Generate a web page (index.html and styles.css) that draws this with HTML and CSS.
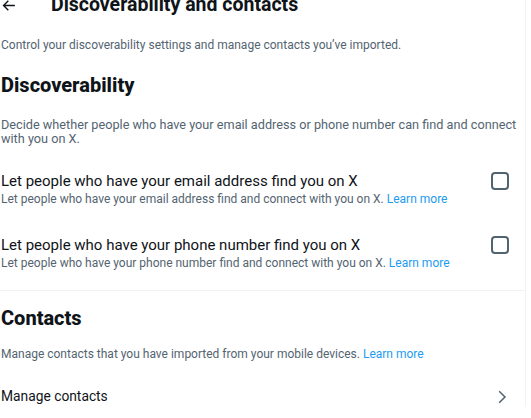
FILE: index.html
```html
<!DOCTYPE html>
<html lang="en">
<head>
<meta charset="utf-8">
<title>Discoverability and contacts</title>
<link rel="stylesheet" href="styles.css">
</head>
<body>
<main class="page">
  <header class="topbar">
    <span class="back" aria-label="Back">
      <svg viewBox="0 0 24 24" aria-hidden="true"><path d="M7.414 13l5.043 5.04-1.414 1.42L3.586 12l7.457-7.46 1.414 1.42L7.414 11H21v2H7.414z"/></svg>
    </span>
    <h1 class="title">Discoverability and contacts</h1>
  </header>
  <p class="intro">Control your discoverability settings and manage contacts you’ve imported.</p>

  <section class="section section-disc">
    <h2 class="heading">Discoverability</h2>
    <p class="desc desc-disc">Decide whether people who have your email address or phone number can find and connect with you on X.</p>
    <div class="setting">
      <div class="setting-text">
        <div class="setting-title">Let people who have your email address find you on X</div>
        <div class="setting-sub">Let people who have your email address find and connect with you on X. <a class="link" href="#">Learn more</a></div>
      </div>
      <span class="checkbox"></span>
    </div>
    <div class="setting">
      <div class="setting-text">
        <div class="setting-title">Let people who have your phone number find you on X</div>
        <div class="setting-sub">Let people who have your phone number find and connect with you on X. <a class="link" href="#">Learn more</a></div>
      </div>
      <span class="checkbox"></span>
    </div>
  </section>

  <section class="section section-contacts">
    <h2 class="heading">Contacts</h2>
    <p class="desc desc-contacts">Manage contacts that you have imported from your mobile devices. <a class="link" href="#">Learn more</a></p>
    <div class="nav-row">
      <span class="nav-label">Manage contacts</span>
      <svg class="chevron" viewBox="0 0 24 24" aria-hidden="true"><path d="M14.586 12L7.543 4.96l1.414-1.42L17.414 12l-8.457 8.46-1.414-1.42L14.586 12z"/></svg>
    </div>
  </section>
</main>
</body>
</html>
```

FILE: styles.css
```css
* { box-sizing: border-box; }

html, body {
  margin: 0;
  padding: 0;
  background: #ffffff;
  overflow: hidden;
}

body {
  font-family: Roboto, "Liberation Sans", Arial, sans-serif;
  color: #0f1419;
}

.page {
  width: 526px;
  min-height: 418px;
  border-right: 1px solid #eff3f4;
  padding: 0 16px 0 1px;
}

.topbar {
  display: flex;
  align-items: center;
  height: 36px;
  margin-top: -13px;
}

.back {
  display: flex;
  width: 17px;
  height: 17px;
  margin-right: 34px;
  margin-left: -1px;
}

.back svg {
  width: 17px;
  height: 17px;
  fill: #0f1419;
}

.title {
  margin: 0;
  font-size: 19.5px;
  line-height: 22px;
  font-weight: 700;
}

.intro {
  margin: 0;
  padding-top: 15px;
  font-size: 12px;
  line-height: 14px;
  color: #536471;
}

.heading {
  margin: 0;
  font-size: 20px;
  line-height: 22px;
  font-weight: 800;
}

.section-disc .heading { padding-top: 22px; }

.desc {
  margin: 0;
  font-size: 12px;
  line-height: 14px;
  color: #536471;
}

.desc-disc {
  font-size: 12.7px;
  margin-right: -14px;
  padding-top: 22px;
  padding-bottom: 13px;
}

.setting {
  display: flex;
  align-items: flex-start;
  justify-content: space-between;
  gap: 16px;
  padding: 13px 0 16px;
}

.setting-title {
  font-size: 15px;
  line-height: 19px;
}

.setting-sub {
  font-size: 12px;
  line-height: 16px;
  color: #536471;
}

.link {
  color: #1d9bf0;
  text-decoration: none;
}

.checkbox {
  flex: none;
  width: 18px;
  height: 18px;
  border: 2px solid #536471;
  border-radius: 4px;
}

.section-disc {
  padding-bottom: 3px;
  border-bottom: 1px solid #eff3f4;
  margin-right: -16px;
  padding-right: 16px;
  margin-left: -1px;
  padding-left: 1px;
}

.section-contacts .heading { padding-top: 16px; }

.desc-contacts { padding-top: 18px; }

.nav-row {
  display: flex;
  align-items: center;
  justify-content: space-between;
  padding-top: 26px;
}

.nav-label {
  font-size: 13.8px;
  line-height: 19px;
}

.chevron {
  width: 18px;
  height: 18px;
  margin-right: -2px;
  fill: #536471;
}
```
